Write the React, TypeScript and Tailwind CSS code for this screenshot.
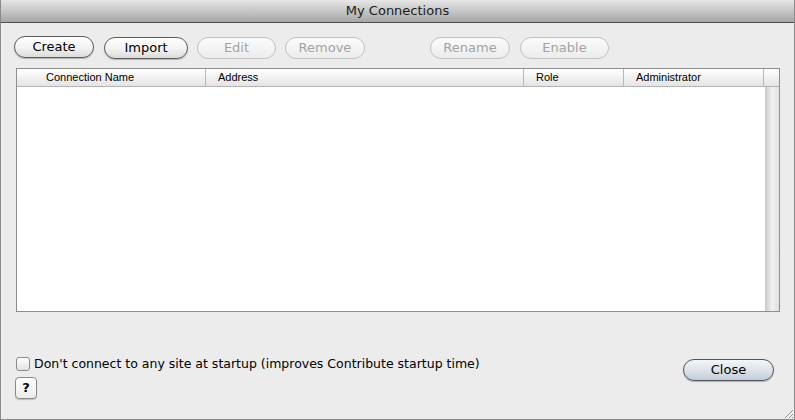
import React from "react";

const font = { fontFamily: '"Lucida Grande", "DejaVu Sans", sans-serif' };

function PillButton({
  label,
  width,
  disabled,
}: {
  label: string;
  width: string;
  disabled?: boolean;
}) {
  return (
    <button
      className={
        disabled
          ? `${width} h-[22px] rounded-full border border-[#c2c2c2] bg-gradient-to-b from-[#fbfbfb] to-[#ececec] text-[13px] text-[#a3a3a3]`
          : `${width} h-[22px] rounded-full border border-[#5c5c5c] bg-gradient-to-b from-white via-[#f4f4f4] to-[#dcdcdc] text-[13px] text-black shadow-[0_1px_1px_rgba(0,0,0,0.25)]`
      }
    >
      {label}
    </button>
  );
}

export default function App() {
  return (
    <div
      className="w-[795px] h-[420px] flex flex-col bg-[#ececec] border-x border-b border-[#8a8a8a] overflow-hidden"
      style={font}
    >
      <div
        className="
          h-[23px] flex-shrink-0 flex items-center justify-center
          bg-gradient-to-b from-[#e6e6e6] to-[#a7a7a7]
          border-b border-[#4f4f4f]
        "
      >
        <span className="text-[13px] text-[#1a1a1a]">My Connections</span>
      </div>

      <div className="flex-grow flex flex-col pl-[13px] relative">
        <div className="flex items-center mt-[12px]">
          <PillButton label="Create" width="w-[80px]" />
          <div className="ml-[10px]">
            <PillButton label="Import" width="w-[84px]" />
          </div>
          <div className="ml-[9px]">
            <PillButton label="Edit" width="w-[79px]" disabled />
          </div>
          <div className="ml-[9px]">
            <PillButton label="Remove" width="w-[80px]" disabled />
          </div>
          <div className="ml-[65px]">
            <PillButton label="Rename" width="w-[80px]" disabled />
          </div>
          <div className="ml-[10px]">
            <PillButton label="Enable" width="w-[89px]" disabled />
          </div>
        </div>

        <div className="ml-[2px] mt-[9px] w-[764px] h-[244px] border border-[#8e8e8e] bg-white flex flex-col">
          <div
            className="h-[18px] flex text-[11px] text-black border-b border-[#b4b4b4] bg-gradient-to-b from-white to-[#e4e4e4]"
            style={{ fontFamily: '"Liberation Sans", Arial, sans-serif' }}
          >
            <div className="w-[189px] pl-[29px] flex items-center border-r border-[#b8b8b8]">
              Connection Name
            </div>
            <div className="w-[318px] pl-[12px] flex items-center border-r border-[#b8b8b8]">
              Address
            </div>
            <div className="w-[100px] pl-[12px] flex items-center border-r border-[#b8b8b8]">
              Role
            </div>
            <div className="w-[140px] pl-[12px] flex items-center border-r border-[#b8b8b8]">
              Administrator
            </div>
            <div className="flex-grow" />
          </div>
          <div className="flex-grow flex">
            <div className="flex-grow" />
            <div className="w-[14px] bg-gradient-to-r from-[#c8c8c8] via-[#f2f2f2] to-[#e0e0e0]" />
          </div>
        </div>

        <div className="flex mt-[44px]">
          <div className="flex flex-col">
            <div className="flex items-center h-[16px]">
              <div className="ml-[2px] w-[14px] h-[14px] rounded-[3px] border border-[#8a8a8a] bg-gradient-to-b from-white to-[#e3e3e3]" />
              <span className="ml-[4px] text-[12.5px] leading-[16px] text-black">
                Don't connect to any site at startup (improves Contribute startup time)
              </span>
            </div>
            <button className="mt-[5px] ml-[1px] w-[22px] h-[22px] rounded-[4px] border border-[#8a8a8a] bg-gradient-to-b from-white to-[#ebebeb] text-[13px] font-bold text-black shadow-[0_1px_1px_rgba(0,0,0,0.2)]">
              ?
            </button>
          </div>
          <button
            className="
              ml-auto mr-[20px] mt-[3px] w-[91px] h-[22px] rounded-full
              border border-[#4f5660]
              bg-gradient-to-b from-[#f3f6fa] via-[#dde3ea] to-[#c3ccd7]
              text-[13px] text-black shadow-[0_1px_1px_rgba(0,0,0,0.25)]
            "
          >
            Close
          </button>
        </div>

        <svg className="absolute right-0 bottom-0" width="12" height="12" viewBox="0 0 12 12">
          <path d="M11 3 L3 11 M11 7 L7 11 M11 10 L10 11" stroke="#9a9a9a" strokeWidth="1" />
        </svg>
      </div>
    </div>
  );
}
